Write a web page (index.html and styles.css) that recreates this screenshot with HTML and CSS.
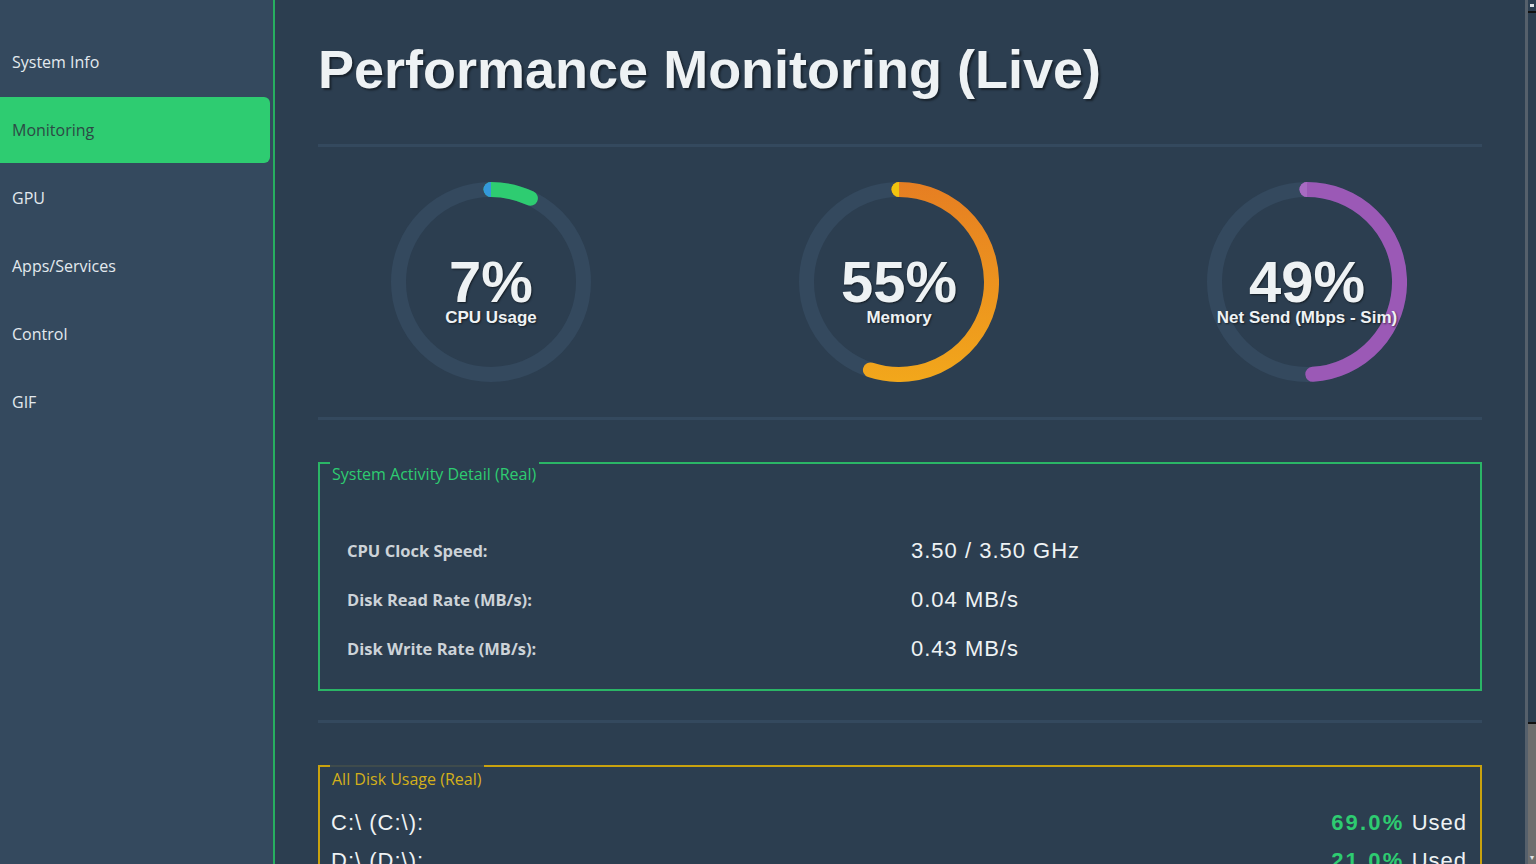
FILE: index.html
```html
<!DOCTYPE html>
<html lang="en">
<head>
<meta charset="utf-8">
<title>Performance Monitoring</title>
<link rel="stylesheet" href="styles.css">
</head>
<body>
<div class="app">
  <nav class="sidebar">
    <div class="nav-item">System Info</div>
    <div class="nav-item active">Monitoring</div>
    <div class="nav-item">GPU</div>
    <div class="nav-item">Apps/Services</div>
    <div class="nav-item">Control</div>
    <div class="nav-item">GIF</div>
  </nav>
  <main class="main">
    <h1 class="title">Performance Monitoring (Live)</h1>
    <div class="sep sep-title"></div>
    <div class="gauges">
      <div class="gauge">
        <svg class="ring" viewBox="0 0 200 200" width="200" height="200">
          <circle cx="100" cy="100" r="92.5" class="track"/>
          <path d="M100 7.5 A92.5 92.5 0 0 1 139.39 16.31" class="arc" stroke="#2ecc71"/>
          <path d="M100 0 A7.5 7.5 0 0 0 100 15 Z" fill="#3498db"/>
        </svg>
        <div class="gauge-text">
          <div class="gauge-value">7%</div>
          <div class="gauge-label">CPU Usage</div>
        </div>
      </div>
      <div class="gauge">
        <svg class="ring" viewBox="0 0 200 200" width="200" height="200">
          <defs>
            <linearGradient id="memgrad" gradientUnits="userSpaceOnUse" x1="0" y1="0" x2="0" y2="200">
              <stop offset="0" stop-color="#e67e22"/>
              <stop offset="1" stop-color="#f2a71b"/>
            </linearGradient>
          </defs>
          <circle cx="100" cy="100" r="92.5" class="track"/>
          <path d="M100 7.5 A92.5 92.5 0 1 1 71.42 187.97" class="arc" stroke="url(#memgrad)"/>
          <path d="M100 0 A7.5 7.5 0 0 0 100 15 Z" fill="#f1c40f"/>
        </svg>
        <div class="gauge-text">
          <div class="gauge-value">55%</div>
          <div class="gauge-label">Memory</div>
        </div>
      </div>
      <div class="gauge">
        <svg class="ring" viewBox="0 0 200 200" width="200" height="200">
          <circle cx="100" cy="100" r="92.5" class="track"/>
          <path d="M100 7.5 A92.5 92.5 0 0 1 105.81 192.32" class="arc" stroke="#9b59b6"/>
          <path d="M100 0 A7.5 7.5 0 0 0 100 15 Z" fill="#a86bc2"/>
        </svg>
        <div class="gauge-text">
          <div class="gauge-value">49%</div>
          <div class="gauge-label">Net Send (Mbps - Sim)</div>
        </div>
      </div>
    </div>
    <div class="sep sep-gauges"></div>
    <section class="box box-green">
      <div class="box-title">System Activity Detail (Real)</div>
      <div class="detail-grid">
        <div class="d-label">CPU Clock Speed:</div>
        <div class="d-value">3.50 / 3.50 GHz</div>
        <div class="d-label">Disk Read Rate (MB/s):</div>
        <div class="d-value">0.04 MB/s</div>
        <div class="d-label">Disk Write Rate (MB/s):</div>
        <div class="d-value">0.43 MB/s</div>
      </div>
    </section>
    <div class="sep sep-detail"></div>
    <section class="box box-gold">
      <div class="box-title">All Disk Usage (Real)</div>
      <div class="disk-row">
        <span class="disk-name">C:\ (C:\):</span>
        <span class="disk-usage"><span class="pct">69.0%</span> Used</span>
      </div>
      <div class="disk-row">
        <span class="disk-name">D:\ (D:\):</span>
        <span class="disk-usage"><span class="pct">21.0%</span> Used</span>
      </div>
    </section>
  </main>
  <div class="scrollbar">
    <div class="sb-top"><span class="sb-knob"></span></div>
    <div class="sb-track"></div>
    <div class="sb-thumb"><span class="sb-arrow">▾</span></div>
  </div>
</div>
</body>
</html>
```

FILE: styles.css
```css
html, body {
  margin: 0;
  padding: 0;
  height: 100%;
  overflow: hidden;
  background: #2c3e50;
}

.app {
  display: flex;
  height: 864px;
  width: 1536px;
  overflow: hidden;
}

/* Sidebar */
.sidebar {
  width: 275px;
  flex: none;
  background: #34495e;
  border-right: 2px solid #27ae60;
  padding-top: 29px;
  display: flex;
  flex-direction: column;
  gap: 2px;
  box-sizing: border-box;
}

.nav-item {
  height: 66px;
  display: flex;
  align-items: center;
  padding-left: 12px;
  margin-right: 3px;
  font-family: "Open Sans", "Noto Sans", sans-serif;
  font-size: 16px;
  color: #e3e9ee;
  border-radius: 0 6px 6px 0;
}

.nav-item.active {
  background: #2ecc71;
  color: #2c4a45;
}

/* Main */
.main {
  flex: 1;
  min-width: 0;
  padding: 37px 43px 0 43px;
  display: flex;
  flex-direction: column;
  overflow: hidden;
}

.title {
  margin: 0;
  font-family: "Liberation Sans", Arial, sans-serif;
  font-weight: 700;
  font-size: 54px;
  line-height: 64px;
  color: #eef2f4;
  text-shadow: 2px 2px 2px rgba(0, 0, 0, 0.45);
}

.sep {
  height: 3px;
  background: #34495e;
  flex: none;
}

.sep-title { margin-top: 43px; }
.sep-gauges { margin-top: 35px; }
.sep-detail { margin-top: 29px; }

/* Gauges */
.gauges {
  margin-top: 35px;
  display: flex;
  justify-content: center;
  gap: 208px;
  padding-right: 2px;
}

.gauge {
  width: 200px;
  height: 200px;
  display: grid;
  flex: none;
}

.gauge > * {
  grid-area: 1 / 1;
}

.ring .track {
  fill: none;
  stroke: #34495e;
  stroke-width: 15;
}

.ring .arc {
  fill: none;
  stroke-width: 15;
  stroke-linecap: round;
}

.gauge-text {
  padding-top: 74px;
  display: flex;
  flex-direction: column;
  align-items: center;
  font-family: "Liberation Sans", Arial, sans-serif;
  font-weight: 700;
  color: #eef2f4;
  text-shadow: 1px 1px 2px rgba(0, 0, 0, 0.55);
  white-space: nowrap;
}

.gauge-value {
  font-size: 58px;
  line-height: 52px;
}

.gauge-label {
  font-size: 17px;
  line-height: 20px;
}

/* Boxes */
.box {
  position: relative;
  flex: none;
  border: 2px solid;
}

.box-green {
  margin-top: 42px;
  border-color: #2bb566;
  padding: 62px 20px 16px 27px;
}

.box-gold {
  margin-top: 42px;
  border-color: #c9a20e;
  padding: 37px 13px 0 11px;
}

.box-title {
  position: absolute;
  top: -2px;
  left: 10px;
  height: 24px;
  line-height: 24px;
  padding: 0 3px 0 2px;
  background: #2c3e50;
  font-family: "Open Sans", "Noto Sans", sans-serif;
  font-size: 16px;
}

.box-green .box-title { color: #2ecc71; }
.box-gold .box-title {
  color: #d4b01a;
  border-top: 2px solid #3e4b4c;
  height: 22px;
}

.detail-grid {
  display: grid;
  grid-template-columns: 564px 1fr;
  grid-auto-rows: 49px;
  align-items: center;
}

.d-label {
  font-family: "Open Sans", "Noto Sans", sans-serif;
  font-weight: 700;
  font-size: 16.5px;
  color: #cdd3d8;
}

.d-value {
  font-family: "Liberation Sans", Arial, sans-serif;
  font-size: 22px;
  letter-spacing: 1px;
  color: #eef2f4;
}

.disk-row {
  height: 38px;
  display: flex;
  justify-content: space-between;
  align-items: center;
  font-family: "Liberation Sans", Arial, sans-serif;
  font-size: 22px;
  letter-spacing: 1px;
  color: #eef2f4;
}

.pct {
  color: #2ecc71;
  font-weight: 700;
  letter-spacing: 2.2px;
}

/* Scrollbar */
.scrollbar {
  width: 11px;
  flex: none;
  display: flex;
  flex-direction: column;
  background: #2c3e50;
  border-left: 3px solid #56606b;
  box-sizing: border-box;
}

.sb-top {
  height: 11px;
  border-bottom: 2px solid #111;
  display: flex;
  justify-content: center;
  align-items: center;
}

.sb-knob {
  width: 4px;
  height: 3px;
  background: #d8dde2;
}

.sb-track {
  flex: 1;
  background: #2c3e50;
  border-bottom: 2px solid #111;
}

.sb-thumb {
  height: 140px;
  background: #6e6e6e;
  display: flex;
  align-items: flex-end;
  justify-content: center;
}

.sb-arrow {
  font-size: 8px;
  line-height: 12px;
  color: #e0e0e0;
  font-family: "DejaVu Sans", sans-serif;
}
```
